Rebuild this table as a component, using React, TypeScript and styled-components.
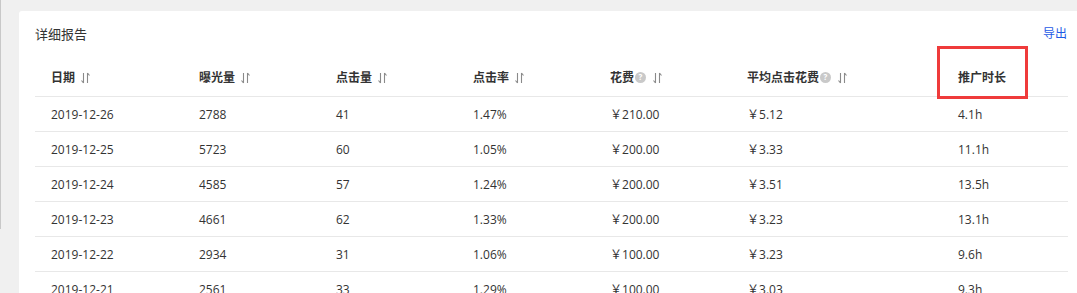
import React from 'react';
import styled, { createGlobalStyle } from 'styled-components';

interface ReportRow {
  date: string;
  views: number;
  clicks: number;
  ctr: string;
  cost: string;
  avgCost: string;
  duration: string;
}

const rows: ReportRow[] = [
  { date: '2019-12-26', views: 2788, clicks: 41, ctr: '1.47%', cost: '210.00', avgCost: '5.12', duration: '4.1h' },
  { date: '2019-12-25', views: 5723, clicks: 60, ctr: '1.05%', cost: '200.00', avgCost: '3.33', duration: '11.1h' },
  { date: '2019-12-24', views: 4585, clicks: 57, ctr: '1.24%', cost: '200.00', avgCost: '3.51', duration: '13.5h' },
  { date: '2019-12-23', views: 4661, clicks: 62, ctr: '1.33%', cost: '200.00', avgCost: '3.23', duration: '13.1h' },
  { date: '2019-12-22', views: 2934, clicks: 31, ctr: '1.06%', cost: '100.00', avgCost: '3.23', duration: '9.6h' },
  { date: '2019-12-21', views: 2561, clicks: 33, ctr: '1.29%', cost: '100.00', avgCost: '3.03', duration: '9.3h' },
];

const columnWidths = [148, 137, 137, 137, 137, 211, 126];

const GlobalStyle = createGlobalStyle`
  body {
    margin: 0;
    background: #f0f0f0;
    overflow: hidden;
    font-family: "Open Sans", "Noto Sans CJK SC", sans-serif;
    color: #333;
  }
`;

const Page = styled.div`
  display: flex;
  height: 293px;
  overflow: hidden;
`;

const EdgeLine = styled.div`
  flex: 0 0 1px;
  height: 229px;
  background: #c8c8c8;
`;

const Main = styled.div`
  padding: 11px 0 0 18px;
`;

const Card = styled.section`
  width: 1065px;
  box-sizing: border-box;
  background: #fff;
  border-radius: 3px;
  padding: 12px 16px 0 16px;
  height: 300px;
`;

const CardHeader = styled.div`
  display: flex;
  justify-content: space-between;
  align-items: center;
  height: 20px;
  margin-bottom: 15px;
`;

const Title = styled.h3`
  margin: 0;
  font-size: 13px;
  font-weight: normal;
  color: #333;
`;

const ExportLink = styled.a`
  font-size: 12px;
  color: #1e5ae6;
  cursor: pointer;
  margin-top: -1px;
  margin-right: 1px;
`;

const Table = styled.table`
  width: 1033px;
  border-collapse: collapse;
  table-layout: fixed;
`;

const HeadCell = styled.th`
  position: relative;
  height: 38px;
  padding: 0 0 0 16px;
  text-align: left;
  font-size: 12px;
  font-weight: bold;
  color: #333;
  border-bottom: 1px solid #e8e8e8;
  white-space: nowrap;
`;

const HeadInner = styled.span`
  display: inline-flex;
  align-items: center;
`;

const Cell = styled.td`
  height: 34px;
  padding: 0 0 0 16px;
  font-size: 12px;
  color: #333;
  border-bottom: 1px solid #e8e8e8;
  white-space: nowrap;
`;

const HelpDot = styled.span`
  display: inline-flex;
  align-items: center;
  justify-content: center;
  width: 11px;
  height: 11px;
  margin-left: 1px;
  border-radius: 50%;
  background: #c9c9c9;
  color: #fff;
  font-size: 8px;
  font-weight: bold;
  line-height: 1;
`;

const SortIcon = styled.svg<{ $gap: number }>`
  margin-left: ${p => p.$gap}px;
  margin-top: 1px;
`;

const Highlight = styled.div`
  position: absolute;
  left: -5px;
  top: -12px;
  width: 91px;
  height: 53px;
  box-sizing: border-box;
  border: 3px solid #ef3b3b;
  pointer-events: none;
`;

const Sort: React.FC<{ gap: number }> = ({ gap }) => (
  <SortIcon $gap={gap} width="10" height="12" viewBox="0 0 10 12" fill="none" stroke="#8a8a8a" strokeWidth="1.1">
    <path d="M2.5 1v10M0.5 8.5l2 2.5" />
    <path d="M6.5 11V1M6.5 1l2 2.5" />
  </SortIcon>
);

const headers: { label: string; help?: boolean; sortable: boolean }[] = [
  { label: '日期', sortable: true },
  { label: '曝光量', sortable: true },
  { label: '点击量', sortable: true },
  { label: '点击率', sortable: true },
  { label: '花费', help: true, sortable: true },
  { label: '平均点击花费', help: true, sortable: true },
  { label: '推广时长', sortable: false },
];

const App: React.FC = () => (
  <>
    <GlobalStyle />
    <Page>
      <EdgeLine />
      <Main>
        <Card>
          <CardHeader>
            <Title>详细报告</Title>
            <ExportLink>导出</ExportLink>
          </CardHeader>
          <Table>
            <colgroup>
              {columnWidths.map((w, i) => (
                <col key={i} style={{ width: w }} />
              ))}
            </colgroup>
            <thead>
              <tr>
                {headers.map(h => (
                  <HeadCell key={h.label}>
                    <HeadInner>
                      {h.label}
                      {h.help && <HelpDot>?</HelpDot>}
                      {h.sortable && <Sort gap={h.help ? 7 : 6} />}
                    </HeadInner>
                    {!h.sortable && <Highlight />}
                  </HeadCell>
                ))}
              </tr>
            </thead>
            <tbody>
              {rows.map(r => (
                <tr key={r.date}>
                  <Cell>{r.date}</Cell>
                  <Cell>{r.views}</Cell>
                  <Cell>{r.clicks}</Cell>
                  <Cell>{r.ctr}</Cell>
                  <Cell>￥{r.cost}</Cell>
                  <Cell>￥{r.avgCost}</Cell>
                  <Cell>{r.duration}</Cell>
                </tr>
              ))}
            </tbody>
          </Table>
        </Card>
      </Main>
    </Page>
  </>
);

export default App;
